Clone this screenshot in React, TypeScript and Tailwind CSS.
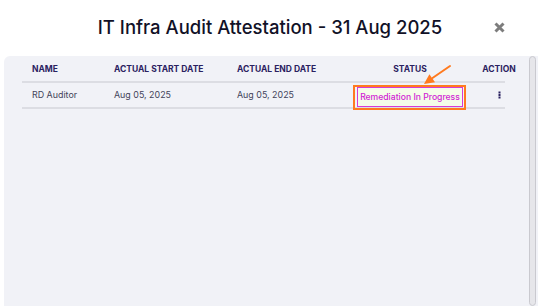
import React from "react";

export default function App() {
  return (
    <div className="relative w-[540px] h-[306px] overflow-hidden bg-white font-['Inter','Liberation_Sans',sans-serif]">
      {/* Header */}
      <div className="grid h-[56px] grid-cols-[1fr_auto_1fr] items-center pb-[2px]">
        <div />
        <h1 className="text-[18.5px] font-medium leading-none text-[#111127]">
          IT Infra Audit Attestation - 31 Aug 2025
        </h1>
        <div className="flex justify-end pr-[35px]">
          <svg width="11" height="11" viewBox="0 0 11 11">
            <path d="M1.5 1.5 L9.5 9.5 M9.5 1.5 L1.5 9.5" stroke="#7d7d7d" strokeWidth="3" strokeLinecap="butt" />
          </svg>
        </div>
      </div>

      {/* Panel */}
      <div className="ml-[4px] flex h-[250px] w-[534px] rounded-tl-[6px] bg-[#f1f2f7]">
        <div className="flex-1 pl-[18px]">
          {/* Header row */}
          <div className="flex h-[27px] w-[483px] items-center border-b-2 border-[#dcdde3] pt-[1px] text-[8.5px] font-bold uppercase text-[#2a2160]">
            <div className="w-[82px] shrink-0 pl-[10px]">Name</div>
            <div className="w-[123px] shrink-0 pl-[10px]">Actual Start Date</div>
            <div className="w-[128px] shrink-0 pl-[10px]">Actual End Date</div>
            <div className="w-[110px] shrink-0 text-center">Status</div>
            <div className="w-[68px] shrink-0 text-center">Action</div>
          </div>
          {/* Data row */}
          <div className="flex h-[26px] w-[483px] items-center border-b-2 border-[#dcdde3] text-[8.9px] text-[#43435a]">
            <div className="w-[82px] shrink-0 pl-[10px]">RD Auditor</div>
            <div className="w-[123px] shrink-0 pl-[10px]">Aug 05, 2025</div>
            <div className="w-[128px] shrink-0 pl-[10px]">Aug 05, 2025</div>
            <div className="flex w-[110px] shrink-0 justify-center pt-[4px]">
              <span className="relative inline-flex h-[20px] items-center whitespace-nowrap border border-[#d63ad6] bg-[#f4fde9] px-[2px] text-[8.6px] font-medium text-[#d024d4]">
                Remediation In Progress
                <span className="absolute -left-[5px] -right-[4px] -top-[3px] -bottom-[4px] border-2 border-[#ff7a1f]" />
              </span>
            </div>
            <div className="flex w-[68px] shrink-0 justify-center">
              <svg width="3" height="8" viewBox="0 0 3 8">
                <rect x="0.5" y="0.5" width="2" height="2" fill="#2a2160" />
                <rect x="0.5" y="3" width="2" height="2" fill="#2a2160" />
                <rect x="0.5" y="5.5" width="2" height="2" fill="#2a2160" />
              </svg>
            </div>
          </div>
        </div>
        {/* Scrollbar */}
        <div className="mr-[2px] w-[7px] rounded-full border border-[#c9c9cf] bg-[#e6e6ea]" />
      </div>

      {/* Annotation arrow */}
      <svg className="absolute left-[418px] top-[62px]" width="36" height="26" viewBox="0 0 36 26">
        <line x1="32" y1="4" x2="14.5" y2="16" stroke="#ff7a1f" strokeWidth="2" strokeLinecap="round" />
        <polygon points="6,22 17,20.2 11.4,12.2" fill="#ff7a1f" />
      </svg>
    </div>
  );
}
